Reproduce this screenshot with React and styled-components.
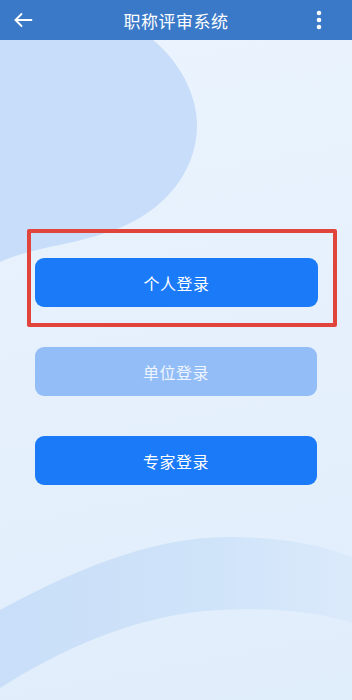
import React from 'react';
import styled, { createGlobalStyle } from 'styled-components';
import { EllipsisVertical } from 'lucide-react';

const GlobalStyle = createGlobalStyle`
	html, body {
		margin: 0;
		padding: 0;
	}
	body {
		font-family: "Noto Sans CJK SC", "Noto Sans", sans-serif;
		background: #e6f0fc;
	}
`;

const Page = styled.div`
	position: relative;
	min-height: 100vh;
	overflow: hidden;
	background: linear-gradient(170deg, #ebf4fe 0%, #e5f0fc 55%, #e0edfb 100%);
`;

const Backdrop = styled.svg`
	position: absolute;
	top: 0;
	left: 0;
	width: 352px;
	height: 700px;
	z-index: 0;
`;

const Header = styled.header`
	position: relative;
	z-index: 2;
	display: grid;
	grid-template-columns: 48px 1fr 48px;
	align-items: center;
	height: 40px;
	background: #3a79c8;
	color: #ffffff;
`;

const BackButton = styled.div`
	display: flex;
	align-items: center;
	padding-left: 11px;
`;

const Title = styled.h1`
	margin: 0;
	text-align: center;
	font-size: 17px;
	font-weight: 400;
	letter-spacing: 0.5px;
`;

const MoreButton = styled.div`
	display: flex;
	justify-content: flex-end;
	padding-right: 21px;
	color: #ffffff;
`;

const Content = styled.main`
	position: relative;
	z-index: 1;
	display: flex;
	flex-direction: column;
	padding: 189px 35px 0 35px;
`;

const Highlight = styled.div`
	margin: 0 -20px 0 -8px;
	padding: 25px 15px 16px 4px;
	border: 4px solid #e0443b;
	border-radius: 2px;
`;

const LoginButton = styled.button`
	display: flex;
	align-items: center;
	justify-content: center;
	width: 100%;
	height: 49px;
	margin-top: ${props => props.gap || 0}px;
	border: none;
	border-radius: 9px;
	background: ${props => (props.muted ? '#93bdf6' : '#1a7af7')};
	color: ${props => (props.muted ? '#eef5ff' : '#ffffff')};
	font-family: "Noto Sans CJK SC", "Noto Sans", sans-serif;
	font-size: 16px;
	letter-spacing: 0.5px;
	cursor: pointer;
`;

function BackArrow() {
	return (
		<svg width="24" height="24" viewBox="0 0 24 24" fill="none"
			stroke="#ffffff" strokeWidth="1.8" strokeLinecap="round" strokeLinejoin="round">
			<path d="M20.5 12H4.5" />
			<path d="M10.5 6L4.5 12L10.5 18" />
		</svg>
	);
}

export default function App() {
	return (
		<Page>
			<GlobalStyle />
			<Backdrop viewBox="0 0 352 700" preserveAspectRatio="none">
				<defs>
					<linearGradient id="band" x1="0" y1="0" x2="1" y2="0">
						<stop offset="0" stopColor="#c9def8" />
						<stop offset="0.6" stopColor="#cfe3f9" />
						<stop offset="1" stopColor="#dbeafb" />
					</linearGradient>
				</defs>
				<path
					d="M0 40 H153 C180 62 197 95 197 125 C197 175 160 214 112 231 C72 245 30 248 0 262 Z"
					fill="#c8ddf9"
				/>
				<path
					d="M0 610 C70 572 150 537 228 537 C290 537 330 548 352 557 L352 623 C320 612 270 606 205 611 C130 618 60 650 0 688 Z"
					fill="url(#band)"
				/>
			</Backdrop>
			<Header>
				<BackButton>
					<BackArrow />
				</BackButton>
				<Title>职称评审系统</Title>
				<MoreButton>
					<EllipsisVertical size={24} strokeWidth={2.6} />
				</MoreButton>
			</Header>
			<Content>
				<Highlight>
					<LoginButton>个人登录</LoginButton>
				</Highlight>
				<LoginButton muted gap={20}>单位登录</LoginButton>
				<LoginButton gap={40}>专家登录</LoginButton>
			</Content>
		</Page>
	);
}
